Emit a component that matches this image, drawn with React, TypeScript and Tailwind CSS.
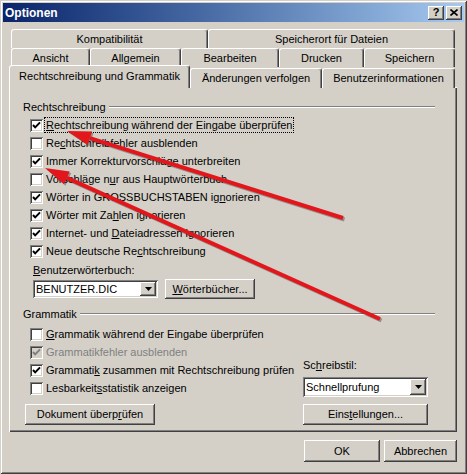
import type { ReactNode } from 'react';

const RAISED =
  'shadow-[inset_-1px_-1px_0_#404040,inset_1px_1px_0_#ffffff,inset_-2px_-2px_0_#808080,inset_2px_2px_0_#d4d0c8]';
const SUNKEN =
  'shadow-[inset_1px_1px_0_#808080,inset_-1px_-1px_0_#ffffff,inset_2px_2px_0_#404040,inset_-2px_-2px_0_#d4d0c8]';

function Check({ checked, disabled }: { checked?: boolean; disabled?: boolean }) {
  return (
    <span
      className={`relative flex h-[13px] w-[13px] shrink-0 items-center justify-center ${SUNKEN} ${
        disabled ? 'bg-[#d4d0c8]' : 'bg-white'
      }`}
    >
      {checked && (
        <svg width="9" height="9" viewBox="0 0 9 9">
          <polyline
            points="1,4 3.2,6.4 8,1.4"
            fill="none"
            stroke={disabled ? '#808080' : '#000'}
            strokeWidth="2"
          />
        </svg>
      )}
    </span>
  );
}

function Row({
  checked,
  disabled,
  focus,
  children,
}: {
  checked?: boolean;
  disabled?: boolean;
  focus?: boolean;
  children: ReactNode;
}) {
  return (
    <div className="flex h-[18px] items-center">
      <Check checked={checked} disabled={disabled} />
      <span
        className={`ml-[1px] inline-block h-[16px] px-[2px] leading-[16px] whitespace-nowrap ${
          focus ? 'outline outline-1 outline-dotted outline-black -outline-offset-1' : ''
        } ${disabled ? 'text-[#808080]' : 'text-black'}`}
      >
        {children}
      </span>
    </div>
  );
}

function Btn({ className, children }: { className: string; children: ReactNode }) {
  return (
    <div className={`flex items-center justify-center bg-[#d4d0c8] ${RAISED} ${className}`}>
      {children}
    </div>
  );
}

function Combo({ className, value }: { className: string; value: string }) {
  return (
    <div className={`flex items-center bg-white p-[2px] ${SUNKEN} ${className}`}>
      <span className="flex-1 pl-[1px] text-black">{value}</span>
      <span className={`flex h-full w-[16px] items-center justify-center bg-[#d4d0c8] ${RAISED}`}>
        <svg width="7" height="4" viewBox="0 0 7 4">
          <polygon points="0,0 7,0 3.5,4" fill="#000" />
        </svg>
      </span>
    </div>
  );
}

function GroupLabel({ children }: { children: ReactNode }) {
  return (
    <div className="flex h-[14px] items-center">
      <span className="pr-[3px]">{children}</span>
      <span className="h-[2px] flex-1 border-t border-b border-t-[#808080] border-b-white" />
    </div>
  );
}

function Tab({ className, children }: { className: string; children: ReactNode }) {
  return (
    <div
      className={`flex items-center justify-center rounded-t-[3px] border-t border-r border-l border-t-white border-r-[#404040] border-l-white bg-[#d4d0c8] shadow-[inset_-1px_0_0_#808080] ${className}`}
    >
      {children}
    </div>
  );
}

function Arrow({ tip, tail }: { tip: [number, number]; tail: [number, number] }) {
  const dx = tail[0] - tip[0];
  const dy = tail[1] - tip[1];
  const len = Math.hypot(dx, dy);
  const ux = dx / len;
  const uy = dy / len;
  const hl = 24;
  const hw = 7;
  const bx = tip[0] + ux * hl;
  const by = tip[1] + uy * hl;
  const pts = `${tip[0]},${tip[1]} ${bx - uy * hw},${by + ux * hw} ${bx + uy * hw},${by - ux * hw}`;
  return (
    <g>
      <g transform="translate(1.5,1.5)" opacity="0.3">
        <line x1={bx} y1={by} x2={tail[0]} y2={tail[1]} stroke="#000" strokeWidth="4" />
        <polygon points={pts} fill="#000" />
      </g>
      <line x1={bx} y1={by} x2={tail[0]} y2={tail[1]} stroke="#e3161b" strokeWidth="4" />
      <polygon points={pts} fill="#e3161b" />
    </g>
  );
}

export default function App() {
  return (
    <div className="relative h-[474px] w-[467px] overflow-hidden bg-[#d4d0c8] p-[3px] font-['Liberation_Sans',Arial,sans-serif] text-[11px] leading-none text-black shadow-[inset_1px_1px_0_#d4d0c8,inset_-1px_-1px_0_#404040,inset_2px_2px_0_#ffffff,inset_-2px_-2px_0_#808080]">
      {/* title bar */}
      <div className="flex h-[19px] items-center bg-gradient-to-r from-[#0a246a] to-[#a6caf0] pr-[2px] pl-[2px]">
        <span className="flex-1 text-[12px] font-bold text-white">Optionen</span>
        <div className="flex gap-[2px]">
          <Btn className="h-[14px] w-[16px] text-[11px] font-bold">?</Btn>
          <Btn className="h-[14px] w-[16px]">
            <svg width="8" height="7" viewBox="0 0 8 7">
              <path d="M0.5 0.5 L7.5 6.5 M7.5 0.5 L0.5 6.5" stroke="#000" strokeWidth="1.6" />
            </svg>
          </Btn>
        </div>
      </div>

      {/* tabs */}
      <div className="mt-[7px] pl-[6px]">
        <div className="ml-[2px] flex h-[19px]">
          <Tab className="w-[197px]">Kompatibilität</Tab>
          <Tab className="w-[247px]">Speicherort für Dateien</Tab>
        </div>
        <div className="ml-[2px] flex h-[19px]">
          <Tab className="w-[79px]">Ansicht</Tab>
          <Tab className="w-[91px]">Allgemein</Tab>
          <Tab className="w-[98px]">Bearbeiten</Tab>
          <Tab className="w-[85px]">Drucken</Tab>
          <Tab className="w-[91px]">Speichern</Tab>
        </div>
        <div className="flex h-[21px] items-end">
          <Tab className="relative z-10 h-[23px] w-[181px] pb-[2px]">Rechtschreibung und Grammatik</Tab>
          <Tab className="h-[20px] w-[132px] pb-[1px]">Änderungen verfolgen</Tab>
          <Tab className="h-[20px] w-[133px] pb-[1px]">Benutzerinformationen</Tab>
        </div>

        {/* panel */}
        <div className="-mt-[1px] flex h-[345px] w-[448px] flex-col pt-[13px] pr-[22px] pl-[14px] shadow-[inset_1px_1px_0_#ffffff,inset_-1px_-1px_0_#404040,inset_-2px_-2px_0_#808080]">
          <GroupLabel>Rechtschreibung</GroupLabel>
          <div className="mt-[2px] flex flex-col pl-[7px]">
            <Row checked focus>
              <u>R</u>echtschreibung während der Eingabe überprüfen
            </Row>
            <Row>
              Re<u>c</u>htschreibfehler ausblenden
            </Row>
            <Row checked>Immer Korrekturvorschläge unterbreiten</Row>
            <Row>
              Vorschläge n<u>u</u>r aus Hauptwörterbuch
            </Row>
            <Row checked>
              Wörter in GROSSBUCHSTABEN ig<u>n</u>orieren
            </Row>
            <Row checked>
              Wörter mit Za<u>h</u>len ignorieren
            </Row>
            <Row checked>
              Internet- und <u>D</u>ateiadressen ignorieren
            </Row>
            <Row checked>
              Neue deutsche Re<u>c</u>htschreibung
            </Row>
          </div>
          <div className="mt-[3px] flex h-[14px] items-center pl-[10px]">
            <span>
              <u>B</u>enutzerwörterbuch:
            </span>
          </div>
          <div className="mt-[2px] flex items-center gap-[7px] pl-[10px]">
            <Combo className="h-[18px] w-[125px]" value="BENUTZER.DIC" />
            <Btn className="h-[20px] w-[90px]">
              <span>
                <u>W</u>örterbücher...
              </span>
            </Btn>
          </div>

          <div className="mt-[8px]">
            <GroupLabel>Grammatik</GroupLabel>
          </div>
          <div className="flex items-end justify-between">
            <div className="flex flex-col">
              <div className="mt-[4px] flex flex-col pl-[7px]">
                <Row>
                  <u>G</u>rammatik während der Eingabe überprüfen
                </Row>
                <Row checked disabled>
                  Grammatikfehler ausblenden
                </Row>
                <Row checked>
                  Grammati<u>k</u> zusammen mit Rechtschreibung prüfen
                </Row>
                <Row>
                  Lesbarkeit<u>s</u>statistik anzeigen
                </Row>
              </div>
              <Btn className="mt-[7px] ml-[2px] h-[21px] w-[130px]">
                <span>
                  Dokument überp<u>r</u>üfen
                </span>
              </Btn>
            </div>
            <div className="mr-[7px] flex w-[125px] flex-col">
              <span className="flex h-[14px] items-center">
                <span>
                  Sc<u>h</u>reibstil:
                </span>
              </span>
              <Combo className="mt-[5px] h-[20px] w-[125px]" value="Schnellprufung" />
              <Btn className="mt-[7px] h-[21px] w-[125px]">
                <span>
                  Eins<u>t</u>ellungen...
                </span>
              </Btn>
            </div>
          </div>
        </div>

        {/* dialog buttons */}
        <div className="mt-[8px] flex w-[448px] justify-end gap-[4px]">
          <Btn className="h-[22px] w-[76px]">OK</Btn>
          <Btn className="h-[22px] w-[73px]">Abbrechen</Btn>
        </div>
      </div>

      {/* red annotation arrows */}
      <svg className="pointer-events-none absolute inset-0" width="467" height="474">
        <Arrow tip={[67, 131]} tail={[343, 218]} />
        <Arrow tip={[45, 168]} tail={[380, 319]} />
      </svg>
    </div>
  );
}
